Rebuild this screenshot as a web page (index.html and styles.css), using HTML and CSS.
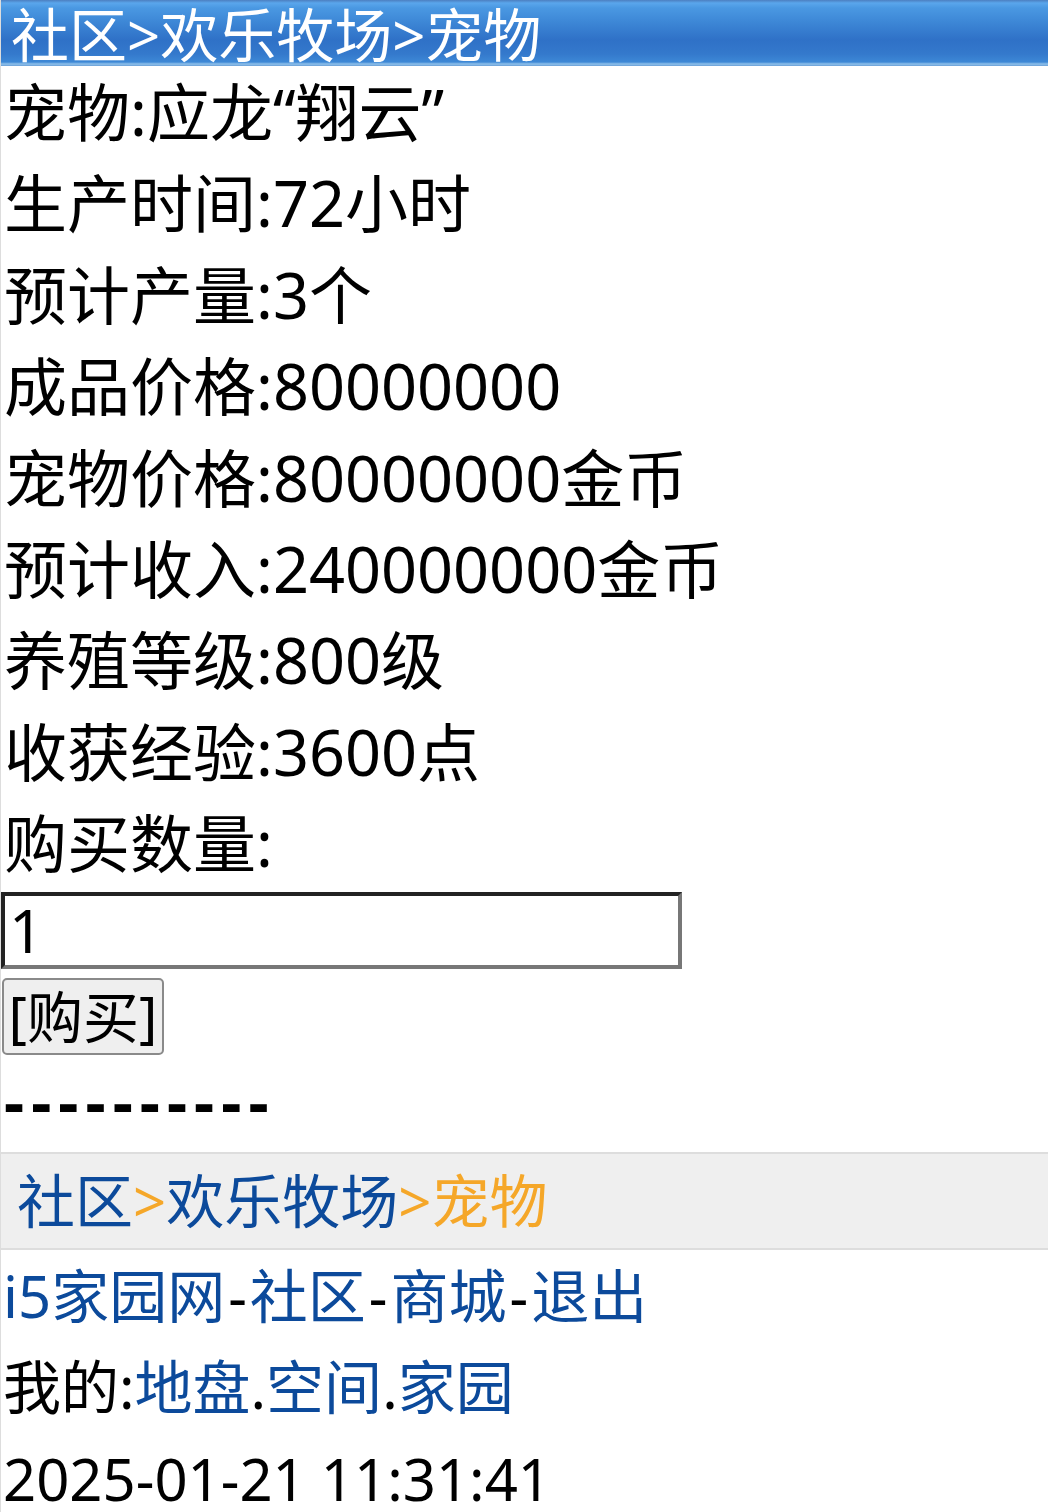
FILE: index.html
```html
<!DOCTYPE html>
<html lang="zh-CN">
<head>
    <meta charset="UTF-8">
    <title>宠物</title>
    <link rel="stylesheet" href="styles.css">
</head>
<body>
    <div class="title">社区&gt;欢乐牧场&gt;宠物</div>

    <div class="info">
        <p>宠物:应龙“翔云”</p>
        <p>生产时间:72小时</p>
        <p>预计产量:3个</p>
        <p>成品价格:80000000</p>
        <p>宠物价格:80000000金币</p>
        <p>预计收入:240000000金币</p>
        <p>养殖等级:800级</p>
        <p>收获经验:3600点</p>
        <p>购买数量:</p>
    </div>

    <form class="buy-form" onsubmit="return false;">
        <input type="text" class="qty" value="1">
        <button type="submit" class="buy-btn">[购买]</button>
    </form>

    <p class="sep">----------</p>

    <div class="crumbs">
        <a href="#">社区</a><span class="gt">&gt;</span><a href="#">欢乐牧场</a><span class="gt">&gt;</span><span class="here">宠物</span>
    </div>

    <div class="footer">
        <p><a href="#">i5家园网</a><span class="dash">-</span><a href="#">社区</a><span class="dash">-</span><a href="#">商城</a><span class="dash">-</span><a href="#">退出</a></p>
        <p>我的:<a href="#">地盘</a>.<a href="#">空间</a>.<a href="#">家园</a></p>
        <p>2025-01-21 11:31:41</p>
    </div>
</body>
</html>
```

FILE: styles.css
```css
body {
    margin: 0;
    background: #fff;
    color: #000;
    font-family: "Noto Sans", "Noto Sans CJK SC", sans-serif;
    border-left: 1px solid #ddd;
}

p {
    margin: 0;
}

a {
    color: #0c4a9b;
    text-decoration: none;
}

.title {
    box-sizing: border-box;
    height: 66px;
    line-height: 62px;
    padding: 4px 0 0 10px;
    font-size: 58px;
    color: #fff;
    white-space: nowrap;
    overflow: hidden;
    background: linear-gradient(to bottom,
        #4c7fc0 0px, #5aa6ec 3px, #4a98e2 8px, #3d87d6 22px,
        #2f71c7 40px, #3479cc 54px, #3d88d6 62px, #8ec0ea 64px, #6aa0d8 66px);
}

.info p {
    font-size: 63px;
    line-height: 91.4px;
    padding-left: 3px;
    white-space: nowrap;
}

.buy-form {
    margin: 3px 0 0;
}

.qty {
    display: block;
    box-sizing: border-box;
    width: 681px;
    height: 77px;
    margin: 0;
    padding: 0 4px;
    font-family: inherit;
    font-size: 60px;
    color: #000;
    background: #fff;
    border: 4px solid;
    border-color: #222 #777 #777 #222;
    outline: none;
}

.buy-btn {
    display: block;
    box-sizing: border-box;
    width: 162px;
    height: 77px;
    margin: 9px 0 0 1px;
    padding: 0;
    font-family: inherit;
    font-size: 56px;
    line-height: 1;
    color: #000;
    background: #efefef;
    border: 2px solid #8a8a8a;
    border-radius: 5px;
}

.sep {
    font-size: 63px;
    line-height: 91.4px;
    padding-left: 3px;
    letter-spacing: 7px;
    font-weight: bold;
}

.crumbs {
    box-sizing: border-box;
    height: 98px;
    margin-top: 6px;
    line-height: 94px;
    padding-left: 16px;
    font-size: 58px;
    white-space: nowrap;
    background: #efefef;
    border-top: 2px solid #ddd;
    border-bottom: 2px solid #ddd;
}

.crumbs .gt,
.crumbs .here {
    color: #f5a729;
}

.footer p {
    font-size: 58px;
    line-height: 91.4px;
    padding-left: 2px;
    white-space: nowrap;
}

.footer .dash {
    margin: 0 3px;
}
```
